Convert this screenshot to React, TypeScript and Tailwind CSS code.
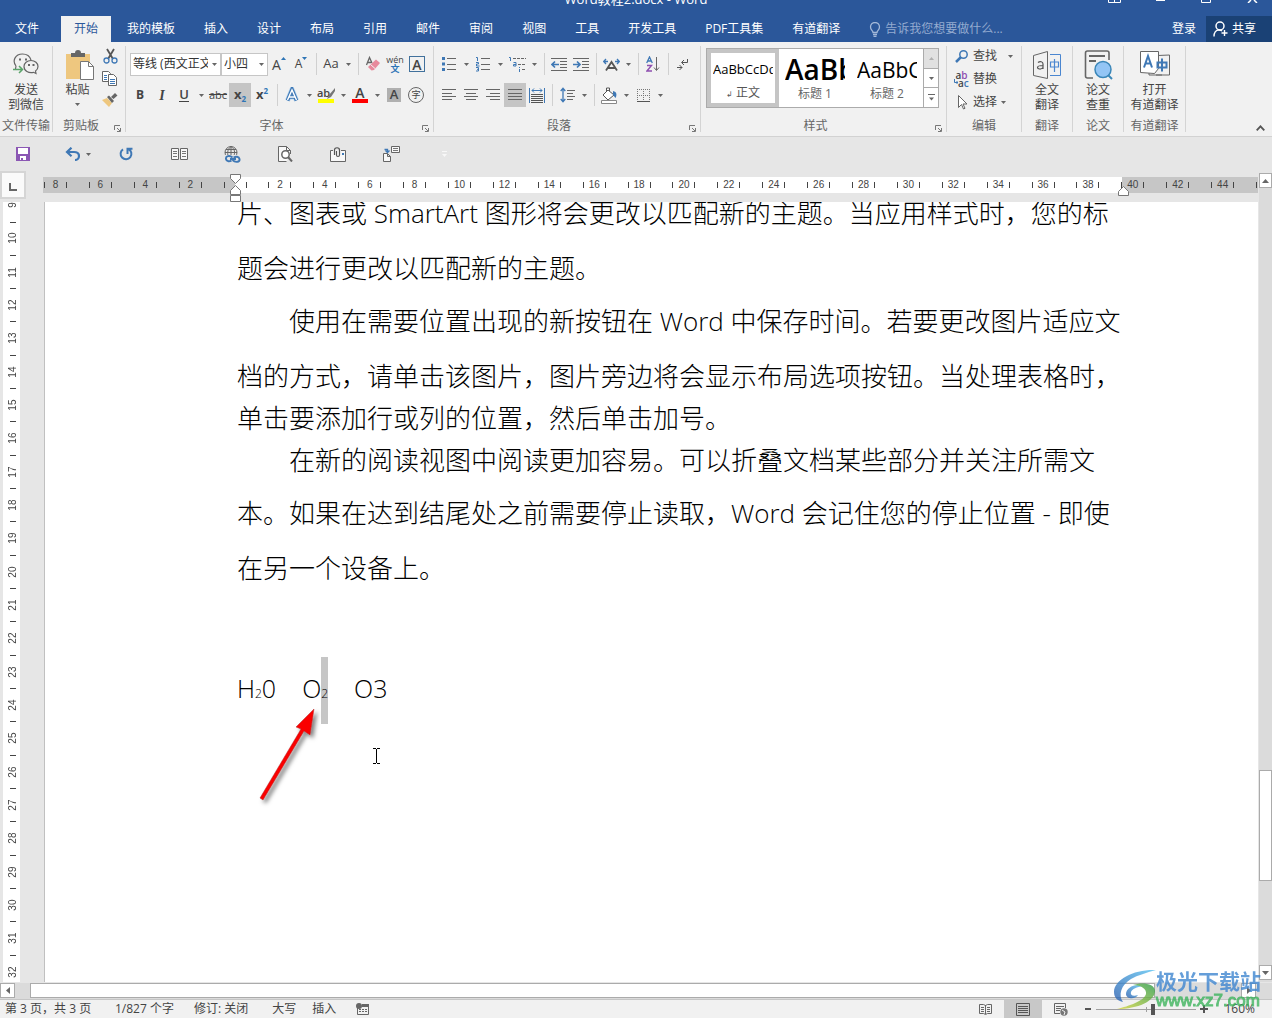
import React from 'react';

const tabs = ['我的模板', '插入', '设计', '布局', '引用', '邮件', '审阅', '视图', '工具', '开发工具', 'PDF工具集', '有道翻译'];

const rulerLabels = ['8', '6', '4', '2', '', ...Array.from({ length: 22 }, (_, i) => String((i + 1) * 2))];
const sideLabels = Array.from({ length: 24 }, (_, i) => String(i + 9));

const lines = [
  { text: '片、图表或 SmartArt 图形将会更改以匹配新的主题。当应用样式时，您的标', style: '' },
  { text: '题会进行更改以匹配新的主题。', style: 'mt-[33px]' },
  { text: '使用在需要位置出现的新按钮在 Word 中保存时间。若要更改图片适应文', style: 'mt-[31px] indent-[2em]' },
  { text: '档的方式，请单击该图片，图片旁边将会显示布局选项按钮。当处理表格时，', style: 'mt-[33px]' },
  { text: '单击要添加行或列的位置，然后单击加号。', style: 'mt-5' },
  { text: '在新的阅读视图中阅读更加容易。可以折叠文档某些部分并关注所需文', style: 'mt-5 indent-[2em]' },
  { text: '本。如果在达到结尾处之前需要停止读取，Word 会记住您的停止位置 - 即使', style: 'mt-[31px]' },
  { text: '在另一个设备上。', style: 'mt-[33px]' },
];

type IconProps = { w: number; h: number; children: React.ReactNode; className?: string };

function Icon({ w, h, children, className = '' }: IconProps) {
  return (
    <svg width={w} height={h} viewBox={`0 0 ${w} ${h}`} fill="none" className={`shrink-0 ${className}`} aria-hidden="true">
      {children}
    </svg>
  );
}

function Caret({ className = '' }: { className?: string }) {
  return (
    <Icon w={5} h={3} className={className}>
      <path d="M0 0h5L2.500 3z" fill="#666" />
    </Icon>
  );
}

function Tool({ label, active, children }: { label: string; active?: boolean; children: React.ReactNode }) {
  return (
    <button
      type="button"
      aria-label={label}
      className={`flex h-6 w-[22px] shrink-0 items-center justify-center text-[#444] ${active ? 'bg-[#c5c5c5]' : ''}`}
    >
      {children}
    </button>
  );
}

function DropArrow({ label }: { label: string }) {
  return (
    <button type="button" aria-label={label} className="flex h-6 w-3 shrink-0 items-center justify-center">
      <Caret />
    </button>
  );
}

function Divider() {
  return (
    <span className="flex w-2 shrink-0 justify-center">
      <span className="h-[22px] w-px bg-[#d0d0d0]" />
    </span>
  );
}

function Group({ label, width, launcher, children }: { label: string; width: string; launcher?: boolean; children: React.ReactNode }) {
  return (
    <section className={`my-1 flex shrink-0 flex-col border-r border-[#d4d4d4] ${width}`}>
      <div className="flex-1">{children}</div>
      <div className={`relative flex h-3 items-center justify-center whitespace-nowrap leading-3 text-[#666] ${launcher ? 'pr-4' : ''}`}>
        {label}
        {launcher && (
          <button type="button" aria-label={`${label}设置`} className="absolute right-1 bottom-0">
            <Icon w={7} h={7}>
              <path d="M.5 5V.5H6M3 3l3 3M6.500 3v3.500H3" stroke="#777" />
            </Icon>
          </button>
        )}
      </div>
    </section>
  );
}

function BigButton({ icon, text }: { icon: React.ReactNode; text: string[] }) {
  return (
    <button type="button" className="flex w-full flex-col items-center whitespace-nowrap pt-[3px] leading-[15px] text-[#444]">
      <span className="flex h-[33px] items-center justify-center">{icon}</span>
      {text.map((t) => (
        <span key={t}>{t}</span>
      ))}
    </button>
  );
}

function AlignIcon({ d }: { d: string }) {
  return (
    <Icon w={14} h={12}>
      <path d={d} stroke="#666" />
    </Icon>
  );
}

function TitleBar() {
  return (
    <header className="bg-[#2b579a] text-white">
      <div className="relative flex h-4 justify-center overflow-hidden">
        <h1 className="-mt-[10px] text-[13px] leading-[18px]">Word教程2.docx - Word</h1>
        <div className="absolute top-0 right-[13px] flex gap-[33px]">
          <button type="button" aria-label="功能区显示选项">
            <Icon w={13} h={3}><path d="M.5 0v2.500h12V0M6.500 0v2" stroke="#fff" /></Icon>
          </button>
          <button type="button" aria-label="最小化">
            <Icon w={13} h={3}><path d="M2 .5h9" stroke="#fff" /></Icon>
          </button>
          <button type="button" aria-label="还原">
            <Icon w={13} h={3}><path d="M1.500 0v2.500h9V0" stroke="#fff" /></Icon>
          </button>
          <button type="button" aria-label="关闭">
            <Icon w={13} h={3}><path d="M2 3l3-3M11 3L8 0" stroke="#fff" strokeWidth="1.500" /></Icon>
          </button>
        </div>
      </div>
      <nav className="flex h-[26px] whitespace-nowrap leading-6">
        <button type="button" className="w-[61px] shrink-0 pr-[7px]">文件</button>
        <div className="flex shrink-0 gap-[3px]">
          <button type="button" className="bg-[#f1f1f1] px-[13px] text-[#2b579a]">开始</button>
          {tabs.map((t) => (
            <button type="button" key={t} className="px-[13px]">{t}</button>
          ))}
        </div>
        <label className="ml-4 flex flex-1 items-center gap-1">
          <Icon w={12} h={15}>
            <path d="M4 10.500C4 8.500 1.500 8 1.500 5a4.500 4.500 0 0 1 9 0c0 3-2.500 3.500-2.500 5.500zM4 12.500h4M4.500 14.300h3" stroke="#a3b8d8" strokeWidth="1.300" />
          </Icon>
          <input aria-label="告诉我您想要做什么" placeholder="告诉我您想要做什么..." className="w-full min-w-0 bg-transparent outline-none placeholder:text-[#94abd0]" />
        </label>
        <button type="button" className="px-[10px]">登录</button>
        <button type="button" className="flex w-[66px] shrink-0 items-center gap-1 bg-[#1a4175] pl-[7px] pb-px">
          <Icon w={15} h={16}>
            <circle cx="7" cy="5" r="4" stroke="#fff" strokeWidth="1.500" />
            <path d="M1 15.500c0-4 2-6.500 5-6.500 1.500 0 2.500.5 3 1M11.500 9v6M8.500 12h6" stroke="#fff" strokeWidth="1.400" />
          </Icon>
          共享
        </button>
      </nav>
    </header>
  );
}

function FontGroup() {
  return (
    <Group label="字体" width="w-[308px]" launcher>
      <div className="mt-[6px] flex h-6 items-center pl-1">
        <span className="relative flex">
          <select aria-label="字体" className="h-[23px] w-[91px] appearance-none overflow-hidden border border-[#c6c6c6] bg-white pl-[2px] pr-3 text-[#333]">
            <option>等线 (西文正文)</option>
          </select>
          <Caret className="pointer-events-none absolute top-[10px] right-1" />
        </span>
        <span className="relative flex">
          <select aria-label="字号" className="h-[23px] w-[47px] appearance-none border border-[#c6c6c6] bg-white pl-[2px] text-[#333]">
            <option>小四</option>
          </select>
          <Caret className="pointer-events-none absolute top-[10px] right-1" />
        </span>
        <Tool label="增大字号">
          <span className="text-[14px]">A</span>
          <Icon w={5} h={3} className="mb-[12px]"><path d="M0 3h5L2.500 0z" fill="#2e75b6" /></Icon>
        </Tool>
        <Tool label="减小字号">
          <span className="text-[12px]">A</span>
          <Icon w={5} h={3} className="mb-[12px]"><path d="M0 0h5L2.500 3z" fill="#2e75b6" /></Icon>
        </Tool>
        <Divider />
        <Tool label="更改大小写"><span className="text-[13px]">Aa</span></Tool>
        <DropArrow label="大小写选项" />
        <Divider />
        <Tool label="清除所有格式">
          <Icon w={16} h={16}>
            <path d="M1.500 9L4.500 1.500 7 7M2.500 6.500h4" stroke="#666" strokeWidth="1.300" />
            <path d="M11 3.500l4 3.500-6 7-2.500.5L3 11z" fill="#e88a9c" />
            <path d="M5.500 8.500l4.500 4" stroke="#f1f1f1" />
          </Icon>
        </Tool>
        <Tool label="拼音指南">
          <span className="flex flex-col items-center">
            <span className="text-[9px] leading-[9px]">wén</span>
            <span className="text-[9px] font-bold leading-[9px] text-[#2e75b6]">文</span>
          </span>
        </Tool>
        <Tool label="字符边框">
          <span className="flex h-4 w-4 items-center justify-center border border-[#41719c] text-[14px] font-semibold">A</span>
        </Tool>
      </div>
      <div className="mt-[7px] flex h-6 items-center pl-[3px]">
        <Tool label="加粗"><b>B</b></Tool>
        <Tool label="倾斜"><i className="font-['Liberation_Serif',serif] text-[14px] font-bold">I</i></Tool>
        <Tool label="下划线"><span className="border-b border-[#444] text-[13px] font-semibold leading-[13px]">U</span></Tool>
        <DropArrow label="下划线选项" />
        <Tool label="删除线"><s className="text-[11px]">abc</s></Tool>
        <Tool label="下标" active>
          <b className="text-[13px]">x</b>
          <span className="mt-2 text-[8px] font-bold text-[#2e75b6]">2</span>
        </Tool>
        <Tool label="上标">
          <b className="text-[13px]">x</b>
          <span className="mb-2 text-[8px] font-bold text-[#2e75b6]">2</span>
        </Tool>
        <Divider />
        <Tool label="文本效果">
          <Icon w={16} h={16}>
            <path d="M3.500 13.500L8 2.500l4.500 11M5 10h6" stroke="#b5d3ee" strokeWidth="5" />
            <path d="M3.500 13.500L8 2.500l4.500 11M5 10h6" stroke="#3f78b5" strokeWidth="3.600" />
            <path d="M3.500 13L8 3l4.500 10M5 10h6" stroke="#fff" strokeWidth="1.400" />
          </Icon>
        </Tool>
        <DropArrow label="文本效果选项" />
        <Tool label="突出显示">
          <span className="flex flex-col items-center">
            <span className="flex h-3 items-center text-[11px] font-semibold">
              ab
              <Icon w={8} h={11} className="-ml-[3px]"><path d="M8 0L2 7l-2 4 4-2 4-6z" fill="#777" /></Icon>
            </span>
            <span className="h-1 w-4 bg-[#ffff00]" />
          </span>
        </Tool>
        <DropArrow label="突出显示选项" />
        <Tool label="字体颜色">
          <span className="flex flex-col items-center">
            <span className="text-[14px] font-semibold leading-3">A</span>
            <span className="h-1 w-4 bg-[#ff0000]" />
          </span>
        </Tool>
        <DropArrow label="字体颜色选项" />
        <Tool label="字符底纹">
          <span className="flex h-[14px] w-[14px] items-center justify-center bg-[#b0b0b0] text-[13px] font-semibold">A</span>
        </Tool>
        <Tool label="带圈字符">
          <span className="flex h-4 w-4 items-center justify-center rounded-full border border-[#666] text-[9px]">字</span>
        </Tool>
      </div>
    </Group>
  );
}

function ParagraphGroup() {
  return (
    <Group label="段落" width="w-[267px]" launcher>
      <div className="mt-[6px] flex h-6 items-center pl-1">
        <Tool label="项目符号">
          <Icon w={14} h={16}>
            <path d="M0 1h3v3H0zM0 6.500h3v3H0zM0 12h3v3H0z" fill="#3f78b5" />
            <path d="M5 2.500h9M5 8.500h9M5 13.500h9" stroke="#666" />
          </Icon>
        </Tool>
        <DropArrow label="项目符号选项" />
        <Tool label="编号">
          <Icon w={14} h={16}>
            <path d="M0 1.500h1.500V5M0 6.500h2.500v1.500H.5V10h3M0 11.500h2.500V15H0M1 13.300h1.500" stroke="#3f78b5" />
            <path d="M5 2.500h9M5 8.500h9M5 13.500h9" stroke="#666" />
          </Icon>
        </Tool>
        <DropArrow label="编号选项" />
        <Tool label="多级列表">
          <Icon w={17} h={16}>
            <path d="M0 1.500h1.500V5M4.500 6.500h2.500V10H4.500V8.500H7M10.500 11v1M10.500 13v3" stroke="#3f78b5" />
            <path d="M4 2.500h13M9 8.500h8M13 13.500h4" stroke="#666" strokeDasharray="3 1" />
          </Icon>
        </Tool>
        <DropArrow label="多级列表选项" />
        <Divider />
        <Tool label="减少缩进量">
          <Icon w={16} h={13}>
            <path d="M0 .5h16M9 3.500h7M9 6.500h7M9 9.500h7M0 12.500h16" stroke="#666" />
            <path d="M8 6.500H1M4 3.500l-3 3 3 3" stroke="#3f78b5" strokeWidth="1.700" />
          </Icon>
        </Tool>
        <Tool label="增加缩进量">
          <Icon w={16} h={13}>
            <path d="M0 .5h16M9 3.500h7M9 6.500h7M9 9.500h7M0 12.500h16" stroke="#666" />
            <path d="M0 6.500h7M4 3.500l3 3-3 3" stroke="#3f78b5" strokeWidth="1.700" />
          </Icon>
        </Tool>
        <Divider />
        <Tool label="中文版式">
          <Icon w={17} h={13}>
            <path d="M3 12.500L8.500 4l5.500 8.500M5 10h7" stroke="#555" strokeWidth="1.800" />
            <path d="M5 3.500H1M3 1L.7 3.500 3 6M12 3.500h4M14 1l2.300 2.500L14 6" stroke="#3f78b5" strokeWidth="1.300" />
          </Icon>
        </Tool>
        <DropArrow label="中文版式选项" />
        <Divider />
        <Tool label="排序">
          <Icon w={14} h={16}>
            <path d="M.7 7L3.500 1l2.800 6M1.500 5h4" stroke="#3f78b5" strokeWidth="1.300" />
            <path d="M1 9.500h4.500L1 15h5" stroke="#8e4fb0" strokeWidth="1.400" />
            <path d="M10.500 1v13M8 11.500l2.500 3 2.500-3" stroke="#666" />
          </Icon>
        </Tool>
        <Divider />
        <Tool label="显示编辑标记">
          <Icon w={12} h={12}>
            <path d="M10.500 1v3.500H5M7 2L4.500 4.500 7 7M0 9.500h5M2.500 7L5 9.500 2.500 12" stroke="#555" />
          </Icon>
        </Tool>
      </div>
      <div className="mt-[7px] flex h-6 items-center pl-1">
        <Tool label="左对齐"><AlignIcon d="M0 .5h14M0 4.500h10M0 7.500h14M0 10.500h10" /></Tool>
        <Tool label="居中"><AlignIcon d="M0 .5h14M2 4.500h10M0 7.500h14M2 10.500h10" /></Tool>
        <Tool label="右对齐"><AlignIcon d="M0 .5h14M4 4.500h10M0 7.500h14M4 10.500h10" /></Tool>
        <Tool label="两端对齐" active><AlignIcon d="M0 .5h14M0 4.500h14M0 7.500h14M0 10.500h14" /></Tool>
        <Tool label="分散对齐">
          <Icon w={16} h={15}>
            <path d="M.5 0v15M15.500 0v15M3 2.500h10M5 .5l-2 2 2 2M11 .5l2 2-2 2" stroke="#3f78b5" />
            <path d="M2 6.500h12M2 8.500h12M2 10.500h12M2 12.500h12M2 14.500h12" stroke="#555" />
          </Icon>
        </Tool>
        <Divider />
        <Tool label="行距">
          <Icon w={15} h={16}>
            <path d="M3 1v14M.7 4L3 1.300 5.300 4M.7 12L3 14.700 5.300 12" stroke="#3f78b5" strokeWidth="1.300" />
            <path d="M7 3.500h8M7 6.500h6M7 9.500h8M7 12.500h6" stroke="#666" />
          </Icon>
        </Tool>
        <DropArrow label="行距选项" />
        <Divider />
        <Tool label="底纹">
          <Icon w={17} h={17}>
            <path d="M7 3l6 5-6 5-5-5zM5.500 5V1h3v3" fill="#fff" stroke="#555" />
            <path d="M12 4c4 1 4 4 2.500 7L12 8z" fill="#3f78b5" />
            <path d="M.5 13.500h15v3H.5z" fill="#fff" stroke="#888" />
          </Icon>
        </Tool>
        <DropArrow label="底纹选项" />
        <Tool label="边框">
          <Icon w={13} h={13}>
            <path d="M.5 0v12M6.500 0v12M12.500 0v12M0 .5h13M0 6.500h13" stroke="#777" strokeDasharray="1 1" />
            <path d="M0 12.500h13" stroke="#555" />
          </Icon>
        </Tool>
        <DropArrow label="边框选项" />
      </div>
    </Group>
  );
}

function StyleGroup() {
  return (
    <Group label="样式" width="w-[246px]" launcher>
      <div className="mt-[2px] ml-[5px] flex h-[60px] w-[233px] border border-[#ababab] bg-white">
        <button type="button" className="w-[72px] overflow-hidden border-4 border-[#c5c5c5] px-[2px] whitespace-nowrap">
          <span className="block h-[30px] overflow-hidden text-left text-[13px] leading-[30px] text-black">AaBbCcDd</span>
          <span className="block leading-[18px] text-[#555]"><span className="text-[8px]">↲</span> 正文</span>
        </button>
        <button type="button" className="ml-[6px] w-[60px] overflow-hidden whitespace-nowrap">
          <span className="block h-8 overflow-hidden text-left text-[28px] font-semibold leading-8 text-black">AaBb</span>
          <span className="block leading-[18px] text-[#666]">标题 1</span>
        </button>
        <button type="button" className="ml-3 w-[60px] overflow-hidden whitespace-nowrap">
          <span className="block h-8 overflow-hidden text-left text-[21px] leading-[34px] text-black">AaBbC</span>
          <span className="block leading-[18px] text-[#666]">标题 2</span>
        </button>
        <div className="ml-auto flex w-[15px] flex-col divide-y divide-[#ababab] border-l border-[#ababab]">
          <button type="button" aria-label="上一行" className="flex flex-1 items-center justify-center bg-[#e1e1e1]">
            <Icon w={5} h={3}><path d="M0 3h5L2.500 0z" fill="#b0b0b0" /></Icon>
          </button>
          <button type="button" aria-label="下一行" className="flex flex-1 items-center justify-center"><Caret /></button>
          <button type="button" aria-label="其他样式" className="flex flex-1 items-center justify-center">
            <Icon w={7} h={7}><path d="M0 .5h7" stroke="#666" /><path d="M1 3.500h5L3.500 6.500z" fill="#666" /></Icon>
          </button>
        </div>
      </div>
    </Group>
  );
}

function Ribbon() {
  return (
    <div className="flex h-[95px] overflow-hidden border-b border-[#d2d2d2] bg-[#f1f1f1]">
      <Group label="文件传输" width="w-[53px]">
        <BigButton
          text={['发送', '到微信']}
          icon={
            <Icon w={26} h={24} className="mb-1">
              <path d="M3 14C-1 9 2 2 9.500 2 14 2 17 4.500 18 8M3 14l-.5 3" stroke="#666" strokeWidth="1.200" />
              <path d="M18 8.500c4 0 7 2.500 7 6 0 2-1 3.500-2.500 4.500l.5 2.500-2.500-1.200c-5 1-9.500-1.300-9.500-5.800 0-3.500 3-6 7-6z" stroke="#666" strokeWidth="1.200" />
              <path d="M6 6.500h2v2H6zM12 6.500h2v2h-2zM15 12h2v2h-2zM19.500 12h2v2h-2z" fill="#666" />
              <path d="M0 17.500h9M6 14l3.500 3.500L6 21" stroke="#5aa469" strokeWidth="1.500" />
            </Icon>
          }
        />
      </Group>
      <Group label="剪贴板" width="w-[73px]" launcher>
        <div className="flex">
          <button type="button" className="flex w-[49px] flex-col items-center pt-[3px] leading-[15px] text-[#444]">
            <span className="flex h-[33px] items-center">
              <Icon w={29} h={31} className="ml-1">
                <path d="M1 4h24v25H1z" fill="#eec77f" />
                <path d="M6 3h4c0-2 1-3 3-3s3 1 3 3h4v4H6z" fill="#666" />
                <path d="M15.500 11.500h8l5 5v13h-13z" fill="#fff" stroke="#777" />
                <path d="M23.500 11.500v5h5" stroke="#777" />
              </Icon>
            </span>
            粘贴
            <Caret className="mt-[6px]" />
          </button>
          <div className="flex flex-col items-center gap-[7px] pt-[2px]">
            <button type="button" aria-label="剪切">
              <Icon w={15} h={16}>
                <path d="M4 1l6 10M11 1L5 11" stroke="#555" strokeWidth="1.800" />
                <circle cx="3.500" cy="12.500" r="2.500" stroke="#3f78b5" strokeWidth="1.300" />
                <circle cx="11.500" cy="12.500" r="2.500" stroke="#3f78b5" strokeWidth="1.300" />
              </Icon>
            </button>
            <button type="button" aria-label="复制">
              <Icon w={16} h={15}>
                <path d="M.5.5h6l2 2v8h-8z" fill="#fff" stroke="#666" />
                <path d="M6.500 3.500h5l3 3v8h-8z" fill="#fff" stroke="#666" />
                <path d="M2 4.500h3M2 6.500h3M2 8.500h3M8 8.500h5M8 10.500h5M8 12.500h5" stroke="#3f78b5" />
              </Icon>
            </button>
            <button type="button" aria-label="格式刷">
              <Icon w={16} h={15}>
                <path d="M0 7l5-2 5 5-3 4z" fill="#eec77f" />
                <path d="M5 4l2-1.500L12 8l-2 2zM9 4l4-4 2.500 2.500-4 3.500z" fill="#666" />
              </Icon>
            </button>
          </div>
        </div>
      </Group>
      <FontGroup />
      <ParagraphGroup />
      <StyleGroup />
      <Group label="编辑" width="w-[75px]">
        <div className="flex flex-col gap-[5px] pt-px pl-[7px] leading-[18px] text-[#444]">
          <button type="button" className="flex items-center gap-1">
            <Icon w={15} h={13}>
              <circle cx="9.500" cy="4.500" r="3.700" stroke="#3f78b5" strokeWidth="1.500" />
              <path d="M7 7l-5 5" stroke="#3f78b5" strokeWidth="2.500" />
            </Icon>
            查找
            <Caret className="ml-[7px]" />
          </button>
          <button type="button" className="flex items-center gap-1">
            <span className="flex w-[15px] flex-col text-[10px] font-semibold leading-[8px]">
              <span>a<span className="text-[#8e4fb0]">b</span></span>
              <span className="flex">
                <Icon w={4} h={6}><path d="M.5 0v3.500H4M2.500 2L4 3.500 2.500 5" stroke="#3f78b5" /></Icon>
                a<span className="text-[#3f78b5]">c</span>
              </span>
            </span>
            替换
          </button>
          <button type="button" className="flex items-center gap-1">
            <Icon w={15} h={15}>
              <path d="M4.500.5v12l3-3 2 4.500 1.500-.7-2-4.300h4z" fill="#fff" stroke="#666" />
            </Icon>
            选择
            <Caret />
          </button>
        </div>
      </Group>
      <Group label="翻译" width="w-[51px]">
        <BigButton
          text={['全文', '翻译']}
          icon={
            <Icon w={28} h={28} className="mb-[2px]">
              <path d="M.5 4.500L14.500.5v27L.5 24.500z" stroke="#666" />
              <path d="M17 3.500h10.500v21H17" stroke="#4a86d0" />
              <path d="M5 11.500c2-1.500 5-1 5 1.500v5M10 14.500c-3 0-5.500.5-5.500 2s3.500 2.500 5.500 0" stroke="#555" strokeWidth="1.200" />
              <path d="M17.500 11h8v5h-8zM21.500 8v13" stroke="#4a86d0" strokeWidth="1.200" />
            </Icon>
          }
        />
      </Group>
      <Group label="论文" width="w-[51px]">
        <BigButton
          text={['论文', '查重']}
          icon={
            <Icon w={29} h={30} className="mb-[2px]">
              <path d="M9 28H3.500c-1 0-2-.7-2-2V3c0-1 1-2 2-2H23c1 0 2 1 2 2v7" stroke="#666" strokeWidth="1.600" />
              <path d="M5 6h16M5 11h7" stroke="#666" strokeWidth="1.800" />
              <circle cx="19" cy="19.500" r="8" fill="#93c5f5" stroke="#3a86b8" strokeWidth="1.500" />
              <path d="M24 25l4 4" stroke="#3a86b8" strokeWidth="2" />
            </Icon>
          }
        />
      </Group>
      <Group label="有道翻译" width="w-[62px]">
        <BigButton
          text={['打开', '有道翻译']}
          icon={
            <Icon w={30} h={26} className="mb-1">
              <path d="M18 4.500l11.500-.5v20H16M22 24H9l0-2" stroke="#666" />
              <path d="M.5.5L18.500.5v17l-4 5L.5 21.500z" fill="#fff" stroke="#666" />
              <path d="M4 16.500L8 5l4 11.500M5 12.500h6" stroke="#3f78b5" strokeWidth="2" />
              <path d="M17.500 11.500h9v5h-9zM22 7.500v13" stroke="#3f78b5" strokeWidth="2" />
            </Icon>
          }
        />
      </Group>
      <button type="button" aria-label="折叠功能区" className="mt-auto mr-[7px] mb-[5px] ml-auto">
        <Icon w={9} h={6}><path d="M.7 5.300l3.800-4 3.800 4" stroke="#555" strokeWidth="1.800" /></Icon>
      </button>
    </div>
  );
}

function QuickButton({ label, children }: { label: string; children: React.ReactNode }) {
  return (
    <button type="button" aria-label={label} className="flex w-9 items-center justify-center">{children}</button>
  );
}

function QuickAccess() {
  return (
    <div className="flex h-[34px] gap-[17px] bg-[#e6e6e6] pl-[5px]">
      <QuickButton label="保存">
        <Icon w={14} h={14}>
          <path d="M0 0h14v14H0z" fill="#8b57b4" />
          <path d="M2 1h10v6H2zM4 9h6v4H7v-2H5v2H4z" fill="#fff" />
        </Icon>
      </QuickButton>
      <div className="flex items-center">
        <button type="button" aria-label="撤消" className="flex w-7 justify-center">
          <Icon w={15} h={14}>
            <path d="M2 5h7c3 0 5 1.500 5 4s-2 4-4 4M6.500.7L2 5l4.500 4.300" stroke="#3f78b5" strokeWidth="2.200" />
          </Icon>
        </button>
        <button type="button" aria-label="撤消选项" className="flex w-[5px]"><Caret /></button>
      </div>
      <QuickButton label="重复">
        <Icon w={14} h={14}>
          <path d="M4 2.300a5.400 5.400 0 1 0 5.500-.3M8.500 7V1.700h5" stroke="#3f78b5" strokeWidth="2" />
        </Icon>
      </QuickButton>
      <QuickButton label="双页视图">
        <Icon w={17} h={12}>
          <path d="M.5.5h7v11h-7zM9.500.5h7v11h-7z" fill="#f8f8f8" stroke="#666" />
          <path d="M2 3.500h4M2 5.500h4M2 8.500h4M11 3.500h4M11 5.500h4M11 8.500h4" stroke="#777" />
        </Icon>
      </QuickButton>
      <QuickButton label="超链接">
        <Icon w={17} h={17}>
          <circle cx="7" cy="6.500" r="6" stroke="#666" />
          <path d="M1 6.500h12M7 .5v12M2 3.500h10M7 .5C3 3 3 9 5 12M7 .5c4 2.500 4 6 3 9" stroke="#666" />
          <path d="M1 9h16v8H1z" fill="#e6e6e6" />
          <path d="M8.500 11.500c-3-2.500-7-1.500-6.500 1.500.5 3 4 2.500 5.500 1.500M8.500 14c3 3 7.500 2 7-1s-4-2.500-6-1.500M6 13h6" stroke="#3f78b5" strokeWidth="1.900" />
        </Icon>
      </QuickButton>
      <QuickButton label="打印预览">
        <Icon w={15} h={16}>
          <path d="M12.500 8V4.500l-4-4h-8v15h8M8.500.5v4h4" fill="#f8f8f8" stroke="#666" />
          <circle cx="7.500" cy="8.500" r="3.700" fill="#fff" stroke="#666" strokeWidth="1.500" />
          <path d="M10 11l4 4.500" stroke="#666" strokeWidth="2" />
        </Icon>
      </QuickButton>
      <QuickButton label="附件">
        <Icon w={17} h={15}>
          <path d="M3 3.500H.5v11h15v-11H11" fill="#f8f8f8" stroke="#666" />
          <path d="M4.500 8V3c0-3 5-3 5 0v5c0 2-3 2-3 0V4" stroke="#555" strokeWidth="1.200" />
          <path d="M12 6h2v2h-2z" fill="#3f78b5" />
        </Icon>
      </QuickButton>
      <QuickButton label="发送文档">
        <Icon w={17} h={16}>
          <path d="M8.500.5h8v6h-8zM.5 7.500h4l3 3v5h-7zM4.500 7.500v3h3" fill="#f8f8f8" stroke="#666" />
          <path d="M10 2.500h5M10 4.500h5" stroke="#777" />
          <path d="M1.500 3.500h3v3M2.500 4.500l2 2 2-2" stroke="#3f78b5" strokeWidth="1.300" />
        </Icon>
      </QuickButton>
      <QuickButton label="自定义快速访问工具栏">
        <Icon w={5} h={6}><path d="M0 .5h5" stroke="#f8f8f8" /><path d="M0 3h5L2.500 6z" fill="#f8f8f8" /></Icon>
      </QuickButton>
    </div>
  );
}

function HorizontalRuler() {
  return (
    <div className="relative mt-[6px] mb-[9px] flex h-4 bg-[linear-gradient(to_right,#c6c6c6_192px,#fff_192px,#fff_1079px,#c6c6c6_1079px)] pr-px pl-px font-['Liberation_Sans',sans-serif] text-[10px] leading-4 text-[#444]">
      {rulerLabels.map((n, i) => (
        <span key={i} className="flex min-w-0 flex-1 items-center">
          <span className="h-[6px] w-px bg-[#444]" />
          <span className="w-[21px] text-center">{n}</span>
          <span className="h-[6px] w-px bg-[#444]" />
        </span>
      ))}
      <span className="h-[6px] w-px self-center bg-[#444]" />
      <Icon w={11} h={28} className="absolute -top-[3px] left-[187px]">
        <path d="M.5.5h10v4l-5 5-5-5zM.5 20.500v-4l5-5 5 5v4zM.5 21.500h10v6H.5z" fill="#fff" stroke="#777" />
      </Icon>
      <Icon w={11} h={10} className="absolute top-[9px] left-[1075px]">
        <path d="M.5 9.500v-4l5-5 5 5v4z" fill="#fff" stroke="#777" />
      </Icon>
    </div>
  );
}

function Page() {
  return (
    <main className="relative ml-px flex-1 overflow-hidden border-l border-[#c0c0c0] bg-white pl-[192px] text-black">
      <div className="whitespace-nowrap font-['Open_Sans','Noto_Sans_CJK_SC',sans-serif] text-[26px] font-light leading-[22px]">
        {lines.map((line) => (
          <p key={line.text} className={line.style}>{line.text}</p>
        ))}
        <p className="mt-[98px] flex text-[25px]">
          <span>H<small className="text-[12px]">2</small>0</span>
          <span className="ml-[26px]">
            O<small className="bg-[#c6c6c6] pt-[28px] pb-[22px] text-[12px]">2</small>
          </span>
          <span className="ml-[26px]">O3</span>
        </p>
      </div>
      <svg width="70" height="106" viewBox="0 0 70 106" className="absolute top-[500px] left-[210px]" aria-hidden="true">
        <defs>
          <filter id="shade" x="-20%" y="-20%" width="150%" height="150%">
            <feDropShadow dx="3" dy="3" stdDeviation="2" floodColor="#000" floodOpacity="0.5" />
          </filter>
        </defs>
        <path d="M59 7L41 25l5 2L5 96l3 2 41-69 6 4z" fill="#fa0000" stroke="#b03030" strokeWidth=".5" filter="url(#shade)" />
      </svg>
      <svg width="7" height="16" viewBox="0 0 7 16" className="absolute top-[546px] left-[328px]" aria-hidden="true">
        <path d="M0 .5h3M4 .5h3M3.500 1v14M0 15.500h3M4 15.500h3" stroke="#000" />
      </svg>
    </main>
  );
}

function VerticalScroll() {
  return (
    <div className="mt-[2px] flex w-[14px] shrink-0 flex-col border-l border-[#e6e6e6] bg-[#dbdbdb]">
      <button type="button" aria-label="向上滚动" className="flex h-[15px] items-center justify-center border border-[#ababab] bg-white">
        <Icon w={7} h={4}><path d="M0 4h7L3.500 0z" fill="#666" /></Icon>
      </button>
      <div className="flex flex-1 flex-col">
        <div className="flex-[583]" />
        <div className="h-[111px] border border-[#ababab] bg-white" />
        <div className="flex-[84]" />
      </div>
      <button type="button" aria-label="向下滚动" className="mb-[2px] flex h-[15px] items-center justify-center border border-[#ababab] bg-white">
        <Icon w={7} h={4}><path d="M0 0h7L3.500 4z" fill="#666" /></Icon>
      </button>
    </div>
  );
}

function Workspace() {
  return (
    <div className="flex min-h-0 flex-1 bg-[#e6e6e6]">
      <div className="flex w-[43px] shrink-0 flex-col">
        <button type="button" aria-label="制表符" className="mb-[3px] flex h-7 w-[26px] shrink-0 items-center justify-center border-2 border-[#d5d5d5] bg-[#fafafa]">
          <Icon w={8} h={8} className="mt-1"><path d="M1 0v7h7" stroke="#666" strokeWidth="2" /></Icon>
        </button>
        <div className="ml-[3px] flex min-h-0 w-[17px] flex-1 flex-col overflow-hidden bg-white">
          <div className="-mt-[5px] -mb-[15px] flex flex-1 flex-col pl-[2px] font-['Liberation_Sans',sans-serif] text-[10px] leading-[17px] text-[#444]">
            {sideLabels.map((n) => (
              <div key={n} className="flex min-h-0 flex-1 flex-col items-center">
                <span className="min-h-0 flex-1 rotate-180 text-center [writing-mode:vertical-rl]">{n}</span>
                <span className="flex flex-1 items-center"><span className="h-px w-[6px] bg-[#444]" /></span>
              </div>
            ))}
          </div>
        </div>
      </div>
      <div className="flex min-w-0 flex-1 flex-col">
        <HorizontalRuler />
        <Page />
      </div>
      <VerticalScroll />
    </div>
  );
}

function HorizontalScroll() {
  return (
    <div className="flex h-[17px] shrink-0 border-t border-[#e6e6e6] bg-[#dbdbdb] pr-4 pb-px">
      <button type="button" aria-label="向左滚动" className="flex w-[15px] items-center justify-center border border-[#ababab] bg-white">
        <Icon w={4} h={7}><path d="M4 0v7L0 3.500z" fill="#666" /></Icon>
      </button>
      <div className="ml-[15px] flex-1 border border-[#ababab] bg-white" />
      <button type="button" aria-label="向右滚动" className="ml-[86px] flex w-[15px] items-center justify-center border border-[#ababab] bg-white">
        <Icon w={4} h={7}><path d="M0 0v7l4-3.500z" fill="#666" /></Icon>
      </button>
    </div>
  );
}

function StatusBar() {
  return (
    <footer className="flex h-[19px] shrink-0 items-center whitespace-nowrap border-t border-[#c6c6c6] bg-[#f1f1f1] pr-[17px] pl-[5px] leading-[18px] text-[#444]">
      <div className="flex items-center gap-5">
        <span className="w-[90px]">第 3 页，共 3 页</span>
        <span>1/827 个字</span>
        <span>修订: 关闭</span>
        <span className="ml-1">大写</span>
        <span className="-ml-1">插入</span>
        <Icon w={13} h={12}>
          <path d="M1.500 5v6.500h11V3" stroke="#666" />
          <path d="M6 1h7v3H6z" fill="#666" />
          <circle cx="3" cy="3" r="3" fill="#666" />
          <path d="M3 6.500h9M3 8.500h9" stroke="#666" strokeDasharray="2 1" />
        </Icon>
      </div>
      <div className="ml-auto flex h-full items-center">
        <button type="button" aria-label="阅读视图" className="flex h-full w-[38px] items-center justify-center">
          <Icon w={13} h={12}>
            <path d="M.5 1.500h4l2 1 2-1h4v9h-4l-2 1-2-1h-4zM6.500 2v9M2 4.500h3M2 6.500h3M2 8.500h3M8 4.500h3M8 6.500h3M8 8.500h3" stroke="#666" />
          </Icon>
        </button>
        <button type="button" aria-label="页面视图" className="flex h-full w-[38px] items-center justify-center bg-[#c8c8c8]">
          <Icon w={14} h={13}><path d="M.5.5h13v12H.5zM2 3.500h10M2 5.500h10M2 7.500h10M2 9.500h10" stroke="#555" /></Icon>
        </button>
        <button type="button" aria-label="Web 版式视图" className="flex h-full w-[38px] items-center justify-center">
          <Icon w={14} h={13}>
            <path d="M6 10.500H.5V.5h11V5M2 3.500h8M2 5.500h5M2 7.500h4" stroke="#666" />
            <circle cx="10" cy="9" r="3.700" fill="#777" />
            <path d="M8 7l3 2-1 3" stroke="#f1f1f1" />
          </Icon>
        </button>
        <button type="button" aria-label="缩小" className="flex w-4 justify-center">
          <span className="h-[2px] w-[6px] bg-[#555]" />
        </button>
        <input
          type="range"
          aria-label="显示比例"
          min={0}
          max={100}
          defaultValue={57}
          className="h-[11px] w-[100px] appearance-none bg-[linear-gradient(#a0a0a0,#a0a0a0),linear-gradient(#a0a0a0,#a0a0a0)] bg-[length:100%_1px,1px_5px] bg-center bg-no-repeat [&::-webkit-slider-thumb]:h-[11px] [&::-webkit-slider-thumb]:w-1 [&::-webkit-slider-thumb]:appearance-none [&::-webkit-slider-thumb]:bg-[#555]"
        />
        <button type="button" aria-label="放大" className="flex w-4 justify-center">
          <Icon w={8} h={8}><path d="M0 4h8M4 0v8" stroke="#555" strokeWidth="2" /></Icon>
        </button>
        <span className="ml-3">160%</span>
      </div>
    </footer>
  );
}

function Watermark() {
  return (
    <div className="pointer-events-none absolute right-[11px] bottom-[7px] flex items-center opacity-80">
      <Icon w={43} h={42}>
        <defs>
          <linearGradient id="sky" x1="0" y1="1" x2="1" y2="0">
            <stop stopColor="#2a5fb0" />
            <stop offset="1" stopColor="#5cc4f2" />
          </linearGradient>
          <linearGradient id="leaf" x1="0" y1="1" x2="1" y2="0">
            <stop stopColor="#d8d840" />
            <stop offset="1" stopColor="#2a9a48" />
          </linearGradient>
        </defs>
        <path d="M43 1C22 0 1 10 1 23c0 6 4 9 9 10-5-7-2-17 8-23 7-4 15-6 25-9z" fill="url(#sky)" />
        <path d="M30 17c-8-3-17 2-17 8 0 5 9 6 12 1-5 2-8 0-7-3 1-3 6-5 12-6z" fill="url(#sky)" />
        <path d="M20 16c8-3 22-2 22 6 0 10-17 18-38 18 12-3 27-8 29-15 1-5-5-9-13-9z" fill="url(#leaf)" />
      </Icon>
      <div className="flex flex-col whitespace-nowrap">
        <span className="font-['Noto_Sans_CJK_SC',sans-serif] text-[21px] leading-[22px] font-bold text-[#3f86d0]">极光下载站</span>
        <span className="font-['Liberation_Sans',sans-serif] text-[17px] leading-[20px] text-[#3cb45c] [-webkit-text-stroke:1px_#3cb45c]">www.xz7.com</span>
      </div>
    </div>
  );
}

export default function App() {
  return (
    <div className="relative flex h-screen flex-col overflow-hidden bg-[#e6e6e6] font-['Open_Sans','Noto_Sans_CJK_SC',sans-serif] text-[12px]">
      <TitleBar />
      <Ribbon />
      <QuickAccess />
      <Workspace />
      <HorizontalScroll />
      <StatusBar />
      <Watermark />
    </div>
  );
}
